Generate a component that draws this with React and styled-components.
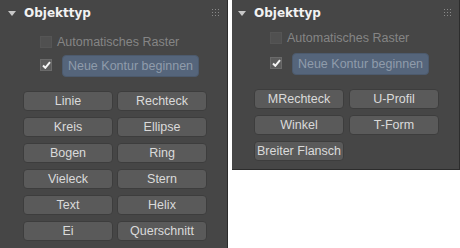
import React from 'react'
import styled, { createGlobalStyle } from 'styled-components'

const GlobalStyle = createGlobalStyle`
  body {
    margin: 0;
    background: #fff;
    font-family: "Liberation Sans", Arial, sans-serif;
  }
`;

const Page = styled.div`
  display: flex;
  align-items: flex-start;
  gap: 4px;
`;

const Panel = styled.div`
  width: 228px;
  box-sizing: border-box;
  background: #464646;
  border-right: 1px solid #2c2c2c;
  border-bottom: 1px solid #2c2c2c;
  padding: 0 0 ${p => p.$bottom}px ${p => p.$left}px;
  display: flex;
  flex-direction: column;
`;

const Header = styled.div`
  height: 26px;
  display: flex;
  align-items: center;
  padding-right: 8px;
`;

const Arrow = styled.span`
  width: 0;
  height: 0;
  border-left: 4px solid transparent;
  border-right: 4px solid transparent;
  border-top: 5px solid #c8c8c8;
  margin-right: 8px;
  margin-top: 1px;
`;

const Title = styled.span`
  font-family: "DejaVu Sans", Verdana, sans-serif;
  font-weight: bold;
  font-size: 12px;
  color: #f2f2f2;
  flex: 1;
`;

const Grip = styled.span`
  display: grid;
  grid-template-columns: repeat(3, 1px);
  gap: 2px;
  margin-top: -2px;
  span {
    width: 1px;
    height: 1px;
    background: #8a8a8a;
  }
`;

const Row = styled.div`
  display: flex;
  align-items: ${p => p.$align || 'center'};
  margin-top: ${p => p.$top}px;
  padding-left: 32px;
`;

const Box = styled.span`
  width: 12px;
  height: 12px;
  box-sizing: border-box;
  flex: none;
  background: ${p => (p.$checked ? '#5c5c5c' : '#505050')};
  border: 1px solid ${p => (p.$checked ? '#6a6a6a' : '#555')};
  display: flex;
  align-items: center;
  justify-content: center;
  margin-top: ${p => p.$offset || 0}px;
`;

const Label = styled.span`
  font-size: 12.5px;
  color: #858585;
  margin-left: 5px;
`;

const BlueButton = styled.div`
  margin-left: 10px;
  width: 137px;
  height: 22px;
  box-sizing: border-box;
  border-radius: 4px;
  background: #55657b;
  border: 1px solid #4c5a6d;
  color: #909cab;
  font-size: 12.5px;
  display: flex;
  align-items: center;
  justify-content: center;
`;

const Grid = styled.div`
  display: grid;
  grid-template-columns: 90px 90px;
  column-gap: ${p => p.$gap}px;
  row-gap: 6px;
  margin-top: 14px;
  padding-left: ${p => p.$indent}px;
`;

const Button = styled.div`
  height: 20px;
  box-sizing: border-box;
  border-radius: 4px;
  background: #5a5a5a;
  border: 1px solid #3d3d3d;
  color: #dadada;
  font-size: 12.5px;
  display: flex;
  align-items: center;
  justify-content: center;
  white-space: nowrap;
`;

const Check = () => (
  <svg width="9" height="8" viewBox="0 0 9 8">
    <path d="M1 4.5 L3.3 6.8 L8 1.2" fill="none" stroke="#f4f4f4" strokeWidth="2" />
  </svg>
);

const ObjectPanel = ({ left, bottom, firstTop, secondTop, indent, gap, buttons }) => (
  <Panel $left={left} $bottom={bottom}>
    <Header>
      <Arrow />
      <Title>Objekttyp</Title>
      <Grip>
        {Array.from({ length: 9 }).map((_, i) => <span key={i} />)}
      </Grip>
    </Header>
    <Row $top={firstTop}>
      <Box />
      <Label>Automatisches Raster</Label>
    </Row>
    <Row $top={secondTop} $align="flex-start">
      <Box $checked $offset={4}>
        <Check />
      </Box>
      <BlueButton>Neue Kontur beginnen</BlueButton>
    </Row>
    <Grid $indent={indent} $gap={gap}>
      {buttons.map(b => <Button key={b}>{b}</Button>)}
    </Grid>
  </Panel>
);

const App = () => (
  <>
    <GlobalStyle />
    <Page>
      <ObjectPanel
        left={8}
        bottom={7}
        firstTop={9}
        secondTop={6}
        indent={15}
        gap={4}
        buttons={['Linie', 'Rechteck', 'Kreis', 'Ellipse', 'Bogen', 'Ring', 'Vieleck', 'Stern', 'Text', 'Helix', 'Ei', 'Querschnitt']}
      />
      <ObjectPanel
        left={6}
        bottom={8}
        firstTop={5}
        secondTop={8}
        indent={16}
        gap={5}
        buttons={['MRechteck', 'U-Profil', 'Winkel', 'T-Form', 'Breiter Flansch']}
      />
    </Page>
  </>
);

export default App
